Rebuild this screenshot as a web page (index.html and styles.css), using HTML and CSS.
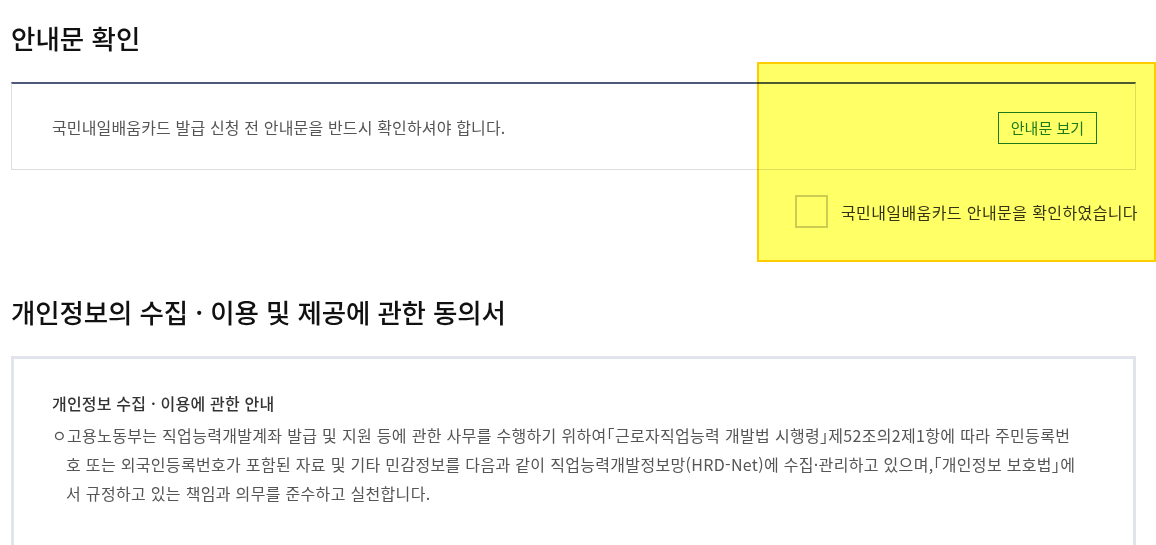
FILE: index.html
```html
<!DOCTYPE html>
<html lang="ko">
<head>
    <meta charset="UTF-8">
    <title>안내문 확인</title>
    <link rel="stylesheet" href="styles.css">
</head>
<body>
    <div class="container">
        <section class="notice">
            <h2 class="sec-title">안내문 확인</h2>
            <div class="notice-box">
                <p>국민내일배움카드 발급 신청 전 안내문을 반드시 확인하셔야 합니다.</p>
                <button type="button" class="btn-line">안내문 보기</button>
            </div>
            <label class="agree-check">
                <span class="check-box"></span>
                <span>국민내일배움카드 안내문을 확인하였습니다</span>
            </label>
            <div class="highlight"></div>
        </section>

        <section class="privacy">
            <h2 class="sec-title">개인정보의 수집 · 이용 및 제공에 관한 동의서</h2>
            <div class="terms-box">
                <h3>개인정보 수집 · 이용에 관한 안내</h3>
                <p class="bullet">ㅇ고용노동부는 직업능력개발계좌 발급 및 지원 등에 관한 사무를 수행하기 위하여「근로자직업능력 개발법 시행령」제52조의2제1항에 따라 주민등록번호 또는 외국인등록번호가 포함된 자료 및 기타 민감정보를 다음과 같이 직업능력개발정보망(HRD-Net)에 수집·관리하고 있으며,「개인정보 보호법」에서 규정하고 있는 책임과 의무를 준수하고 실천합니다.</p>
            </div>
        </section>
    </div>
</body>
</html>
```

FILE: styles.css
```css
body {
    margin: 0;
    padding: 0;
    background: #fff;
    color: #222;
    font-family: "Noto Sans CJK KR", "Noto Sans", sans-serif;
}
.container {
    width: 1125px;
    margin-left: 11px;
}
.sec-title {
    margin: 0;
    font-size: 26.5px;
    font-weight: 500;
    line-height: 36px;
    color: #111;
}
.privacy .sec-title {
    letter-spacing: -0.15px;
}
.notice {
    position: relative;
    padding-top: 20px;
}
.notice-box {
    margin-top: 26px;
    height: 84px;
    border: 1px solid #ddd;
    border-top: 2px solid #4f5a7a;
    display: flex;
    align-items: center;
    justify-content: space-between;
    padding: 1px 38px 0 40px;
}
.notice-box p {
    margin: 0;
    font-size: 16px;
    color: #555;
    letter-spacing: 0.15px;
}
.btn-line {
    height: 32px;
    margin-top: 1px;
    padding: 0 12px;
    background: #fff;
    border: 1px solid #1c7a3c;
    color: #1c7a3c;
    font-family: inherit;
    font-size: 15px;
}
.agree-check {
    display: flex;
    align-items: center;
    justify-content: flex-end;
    gap: 13px;
    margin-top: 25px;
    margin-right: -2px;
    font-size: 16px;
    color: #333;
    letter-spacing: 0.4px;
}
.check-box {
    width: 29px;
    height: 29px;
    border: 2px solid #ccc;
    background: #fff;
}
.highlight {
    position: absolute;
    left: 746px;
    top: 62px;
    width: 395px;
    height: 196px;
    background: #ffff66;
    border: 2px solid #ffcc00;
    mix-blend-mode: multiply;
}
.privacy {
    padding-top: 66px;
}
.terms-box {
    margin-top: 26px;
    border: 3px solid #e1e5eb;
    padding: 32px 55px 40px 38px;
    height: 200px;
}
.terms-box h3 {
    margin: 0 0 6px;
    font-size: 16px;
    font-weight: 500;
    line-height: 24px;
    color: #333;
    letter-spacing: 0.2px;
}
.bullet {
    margin: 0;
    padding-left: 14px;
    text-indent: -14px;
    font-size: 16px;
    line-height: 29px;
    color: #555;
    letter-spacing: 0.32px;
    font-feature-settings: "halt";
}
```
